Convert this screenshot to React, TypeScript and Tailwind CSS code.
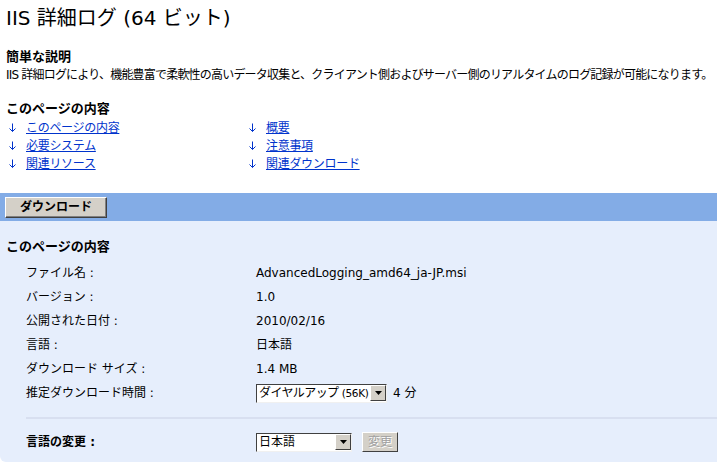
import React from "react";

const FONT = '"DejaVu Sans", "Noto Sans CJK JP", sans-serif';

function DownArrow() {
  return (
    <svg width="9" height="10" viewBox="0 0 9 10" className="shrink-0">
      <path d="M4.5 0.5 V8.5" stroke="#0033cc" strokeWidth="1" fill="none" />
      <path d="M1.5 5.5 L4.5 8.5 L7.5 5.5" stroke="#0033cc" strokeWidth="1" fill="none" />
    </svg>
  );
}

function LinkItem({ text }: { text: string }) {
  return (
    <div className="flex items-center h-[18px]">
      <div className="w-[20px] pl-[2px] flex items-center">
        <DownArrow />
      </div>
      <a href="#" className="text-[#0033cc] underline text-[12px] leading-[18px] tracking-[-0.3px]">
        {text}
      </a>
    </div>
  );
}

function DropButton() {
  return (
    <div className="w-[16px] h-[16px] bg-[#d4d0c8] border border-t-white border-l-white border-b-[#404040] border-r-[#404040] flex items-center justify-center shrink-0">
      <svg width="7" height="4" viewBox="0 0 7 4">
        <path d="M0 0 H7 L3.5 4 Z" fill="#000" />
      </svg>
    </div>
  );
}

function Select({ children, width }: { children: React.ReactNode; width: number }) {
  return (
    <div
      className="h-[19px] bg-white border border-t-[#404040] border-l-[#404040] border-b-[#f0f0f0] border-r-[#f0f0f0] flex items-center pl-[2px] justify-between shrink-0"
      style={{ width }}
    >
      <span className="text-[12px] leading-[16px] whitespace-nowrap overflow-hidden">{children}</span>
      <DropButton />
    </div>
  );
}

function Row({ label, children }: { label: string; children: React.ReactNode }) {
  return (
    <div className="flex items-center h-[24px] px-[6px]">
      <div className="w-[250px] pl-[20px] text-[12px]">{label}</div>
      <div className="text-[12px] flex items-center">{children}</div>
    </div>
  );
}

export default function App() {
  return (
    <div className="w-[717px] h-[462px] bg-white text-black overflow-hidden flex flex-col" style={{ fontFamily: FONT }}>
      <h1 className="text-[20px] leading-[24px] pt-[6px] px-[6px] font-normal">IIS 詳細ログ (64 ビット)</h1>
      <h2 className="text-[13px] leading-[18px] font-bold px-[6px] mt-[18px]">簡単な説明</h2>
      <p className="text-[12px] leading-[18px] px-[6px] whitespace-nowrap tracking-[-0.8px]">
        IIS 詳細ログにより、機能豊富で柔軟性の高いデータ収集と、クライアント側およびサーバー側のリアルタイムのログ記録が可能になります。
      </p>
      <h2 className="text-[13px] leading-[18px] font-bold px-[6px] mt-[16px]">このページの内容</h2>
      <div className="grid grid-cols-[240px_1fr] px-[6px] mt-[1px]">
        <LinkItem text="このページの内容" />
        <LinkItem text="概要" />
        <LinkItem text="必要システム" />
        <LinkItem text="注意事項" />
        <LinkItem text="関連リソース" />
        <LinkItem text="関連ダウンロード" />
      </div>
      <div className="mt-[20px] h-[28px] bg-[#83ace6] flex items-center px-[5px]">
        <button className="w-[102px] h-[21px] bg-[#d4d0c8] border border-t-white border-l-white border-b-[#404040] border-r-[#404040] shadow-[inset_-1px_-1px_0_#808080] text-[12px] font-bold leading-none">
          ダウンロード
        </button>
      </div>
      <div className="flex-1 bg-[#e6eefc] rounded-bl-[6px] flex flex-col">
        <h2 className="text-[13px] leading-[18px] font-bold px-[6px] mt-[17px]">このページの内容</h2>
        <div className="mt-[5px] flex flex-col">
          <Row label="ファイル名 :">AdvancedLogging_amd64_ja-JP.msi</Row>
          <Row label="バージョン :">1.0</Row>
          <Row label="公開された日付 :">2010/02/16</Row>
          <Row label="言語 :">日本語</Row>
          <Row label="ダウンロード サイズ :">1.4 MB</Row>
          <Row label="推定ダウンロード時間 :">
            <Select width={131}>
              <span className="tracking-[-0.6px]">ダイヤルアップ </span>
              <span className="text-[10.5px] tracking-[-0.3px]">(56K)</span>
            </Select>
            <span className="ml-[6px]">4 分</span>
          </Row>
        </div>
        <div className="ml-[26px] mt-[12px] h-[2px] bg-[#d8dff0]" />
        <div className="flex items-center h-[24px] mt-[11px] px-[6px]">
          <div className="w-[250px] pl-[20px] text-[12px] font-bold">言語の変更 :</div>
          <Select width={96}>日本語</Select>
          <button className="ml-[10px] w-[36px] h-[20px] bg-[#d4d0c8] border border-t-white border-l-white border-b-[#404040] border-r-[#404040] text-[12px] leading-none text-[#a0a0a0] [text-shadow:1px_1px_0_#fff]">
            変更
          </button>
        </div>
      </div>
    </div>
  );
}
